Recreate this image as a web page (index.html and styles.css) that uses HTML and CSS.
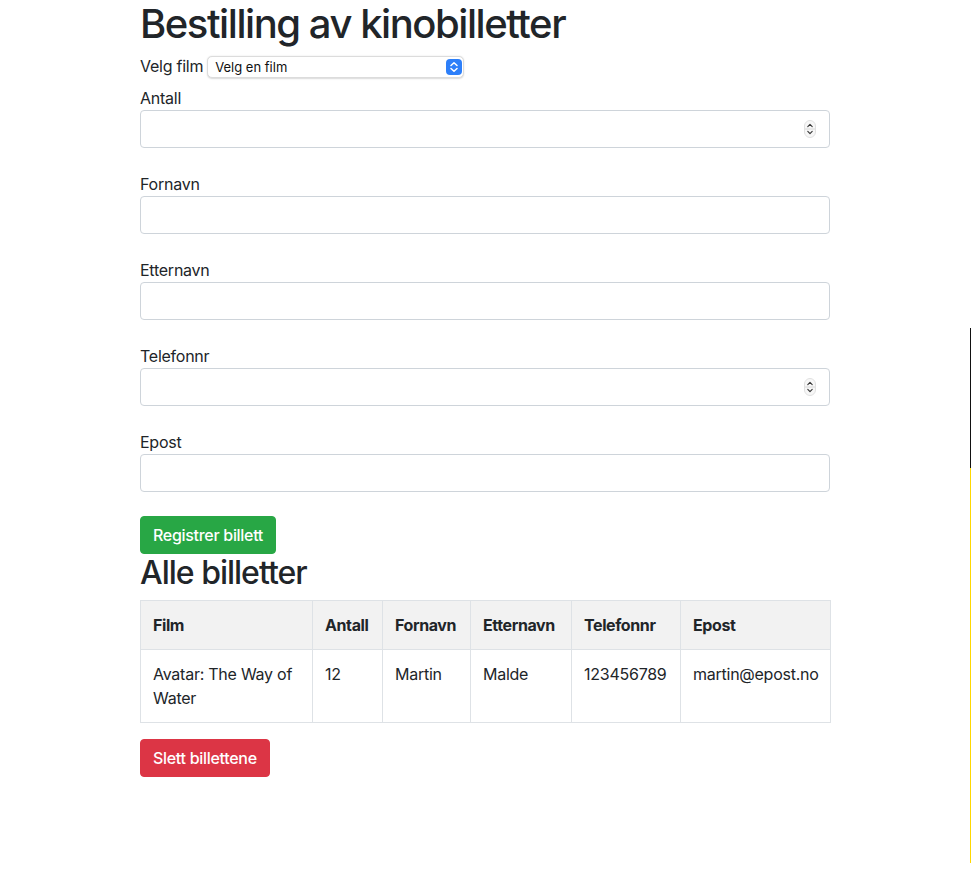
FILE: index.html
```html
<!DOCTYPE html>
<html lang="no">
<head>
<meta charset="utf-8">
<title>Bestilling av kinobilletter</title>
<link rel="stylesheet" href="styles.css">
</head>
<body>
<div class="container">
  <h1 class="title">Bestilling av kinobilletter</h1>
  <div class="film-row">
    <label class="film-label">Velg film</label>
    <span class="select-wrap">
      <select class="film-select">
        <option>Velg en film</option>
      </select>
      <svg class="select-icon" width="16" height="16" viewBox="0 0 16 16" aria-hidden="true">
        <rect x="0" y="0" width="16" height="16" rx="4" fill="#2d7ff9"/>
        <path d="M5 6.5 L8 3.8 L11 6.5" fill="none" stroke="#fff" stroke-width="1.5" stroke-linecap="round" stroke-linejoin="round"/>
        <path d="M5 9.5 L8 12.2 L11 9.5" fill="none" stroke="#fff" stroke-width="1.5" stroke-linecap="round" stroke-linejoin="round"/>
      </svg>
    </span>
  </div>

  <div class="field">
    <label class="field-label">Antall</label>
    <div class="input-wrap">
      <input class="form-control" type="text">
      <svg class="spin-icon" width="12" height="18" viewBox="0 0 12 18" aria-hidden="true">
        <rect x="0.5" y="0.5" width="11" height="17" rx="5.5" fill="#f7f7f7" stroke="#e0e0e0"/>
        <line x1="1" y1="9" x2="11" y2="9" stroke="#d8d8d8"/>
        <path d="M3.8 6.6 L6 4.4 L8.2 6.6" fill="none" stroke="#333" stroke-width="1.1" stroke-linecap="round" stroke-linejoin="round"/>
        <path d="M3.8 11.4 L6 13.6 L8.2 11.4" fill="none" stroke="#333" stroke-width="1.1" stroke-linecap="round" stroke-linejoin="round"/>
      </svg>
    </div>
  </div>

  <div class="field">
    <label class="field-label">Fornavn</label>
    <div class="input-wrap"><input class="form-control" type="text"></div>
  </div>

  <div class="field">
    <label class="field-label">Etternavn</label>
    <div class="input-wrap"><input class="form-control" type="text"></div>
  </div>

  <div class="field">
    <label class="field-label">Telefonnr</label>
    <div class="input-wrap">
      <input class="form-control" type="text">
      <svg class="spin-icon" width="12" height="18" viewBox="0 0 12 18" aria-hidden="true">
        <rect x="0.5" y="0.5" width="11" height="17" rx="5.5" fill="#f7f7f7" stroke="#e0e0e0"/>
        <line x1="1" y1="9" x2="11" y2="9" stroke="#d8d8d8"/>
        <path d="M3.8 6.6 L6 4.4 L8.2 6.6" fill="none" stroke="#333" stroke-width="1.1" stroke-linecap="round" stroke-linejoin="round"/>
        <path d="M3.8 11.4 L6 13.6 L8.2 11.4" fill="none" stroke="#333" stroke-width="1.1" stroke-linecap="round" stroke-linejoin="round"/>
      </svg>
    </div>
  </div>

  <div class="field">
    <label class="field-label">Epost</label>
    <div class="input-wrap"><input class="form-control" type="text"></div>
  </div>

  <button class="btn btn-success" type="button">Registrer billett</button>

  <h2 class="subtitle">Alle billetter</h2>
  <table class="tickets">
    <colgroup>
      <col class="c-film"><col class="c-antall"><col class="c-fornavn"><col class="c-etternavn"><col class="c-tlf"><col class="c-epost">
    </colgroup>
    <tbody>
      <tr class="head-row">
        <th>Film</th><th>Antall</th><th>Fornavn</th><th>Etternavn</th><th>Telefonnr</th><th>Epost</th>
      </tr>
      <tr>
        <td>Avatar: The Way of Water</td><td>12</td><td>Martin</td><td>Malde</td><td>123456789</td><td>martin@epost.no</td>
      </tr>
    </tbody>
  </table>

  <button class="btn btn-danger" type="button">Slett billettene</button>
</div>
<div class="edge-line">
  <div class="edge-black"></div>
  <div class="edge-yellow"></div>
</div>
</body>
</html>
```

FILE: styles.css
```css
* { box-sizing: border-box; }

html, body {
  margin: 0;
  padding: 0;
  background: #fff;
}

body {
  font-family: Inter, "Liberation Sans", "Noto Sans", Arial, sans-serif;
  font-size: 16px;
  line-height: 1.5;
  color: #212529;
  letter-spacing: -0.25px;
}

.container {
  width: 691px;
  padding-right: 1px;
  margin: 0 auto;
}

.title {
  font-size: 40px;
  font-weight: 500;
  line-height: 48px;
  margin: 0 0 5px;
  letter-spacing: -1.45px;
}

.film-row {
  display: flex;
  align-items: flex-start;
  gap: 4px;
  height: 24px;
  margin-bottom: 9px;
}

.film-label {
  line-height: 24px;
  margin-top: 1px;
}

.select-wrap {
  position: relative;
  display: flex;
  margin-top: 3px;
}

.film-select {
  appearance: none;
  -webkit-appearance: none;
  display: block;
  width: 257px;
  height: 22px;
  margin: 0;
  padding: 0 24px 0 7px;
  border: 1px solid #dcdcdc;
  border-radius: 5px;
  background: #fff;
  font-family: Inter, "Liberation Sans", Arial, sans-serif;
  font-size: 13px;
  letter-spacing: 0;
  color: #111;
  box-shadow: 0 0.5px 1.5px rgba(0,0,0,0.15);
}

.select-icon {
  position: absolute;
  right: 2px;
  top: 3px;
}

.field {
  margin-bottom: 24px;
}

.field-label {
  display: block;
  line-height: 24px;
}

.input-wrap {
  position: relative;
}

.form-control {
  display: block;
  width: 100%;
  height: 38px;
  padding: 6px 12px;
  border: 1px solid #ced4da;
  border-radius: 4px;
  background: #fff;
  font-size: 16px;
  font-family: inherit;
}

.spin-icon {
  position: absolute;
  right: 14px;
  top: 10px;
}

.btn {
  display: inline-block;
  padding: 6px 12px;
  border: 1px solid transparent;
  border-radius: 4px;
  font-family: inherit;
  font-size: 16px;
  line-height: 24px;
  font-weight: 500;
  letter-spacing: -0.3px;
  color: #fff;
  cursor: pointer;
  vertical-align: top;
}

.btn-success {
  background: #28a745;
  border-color: #28a745;
}

.btn-danger {
  background: #dc3545;
  border-color: #dc3545;
}

.subtitle {
  font-size: 32px;
  font-weight: 500;
  line-height: 38.4px;
  margin: 0 0 8px;
  letter-spacing: -1px;
}

.tickets {
  width: 100%;
  table-layout: fixed;
  border-collapse: collapse;
  margin-bottom: 16px;
}

.tickets th,
.tickets td {
  padding: 12px;
  border: 1px solid #dee2e6;
  text-align: left;
  vertical-align: top;
  line-height: 24px;
}

.tickets th {
  font-weight: 700;
  letter-spacing: -0.4px;
}

.head-row {
  background: #f2f2f2;
}

.c-film { width: 172px; }
.c-antall { width: 70px; }
.c-fornavn { width: 88px; }
.c-etternavn { width: 101px; }
.c-tlf { width: 109px; }
.c-epost { width: 150px; }

.edge-line {
  position: absolute;
  left: 970px;
  top: 328px;
  width: 1px;
}

.edge-black {
  height: 140px;
  background: #111;
}

.edge-yellow {
  height: 395px;
  background: #ffd800;
}
```
